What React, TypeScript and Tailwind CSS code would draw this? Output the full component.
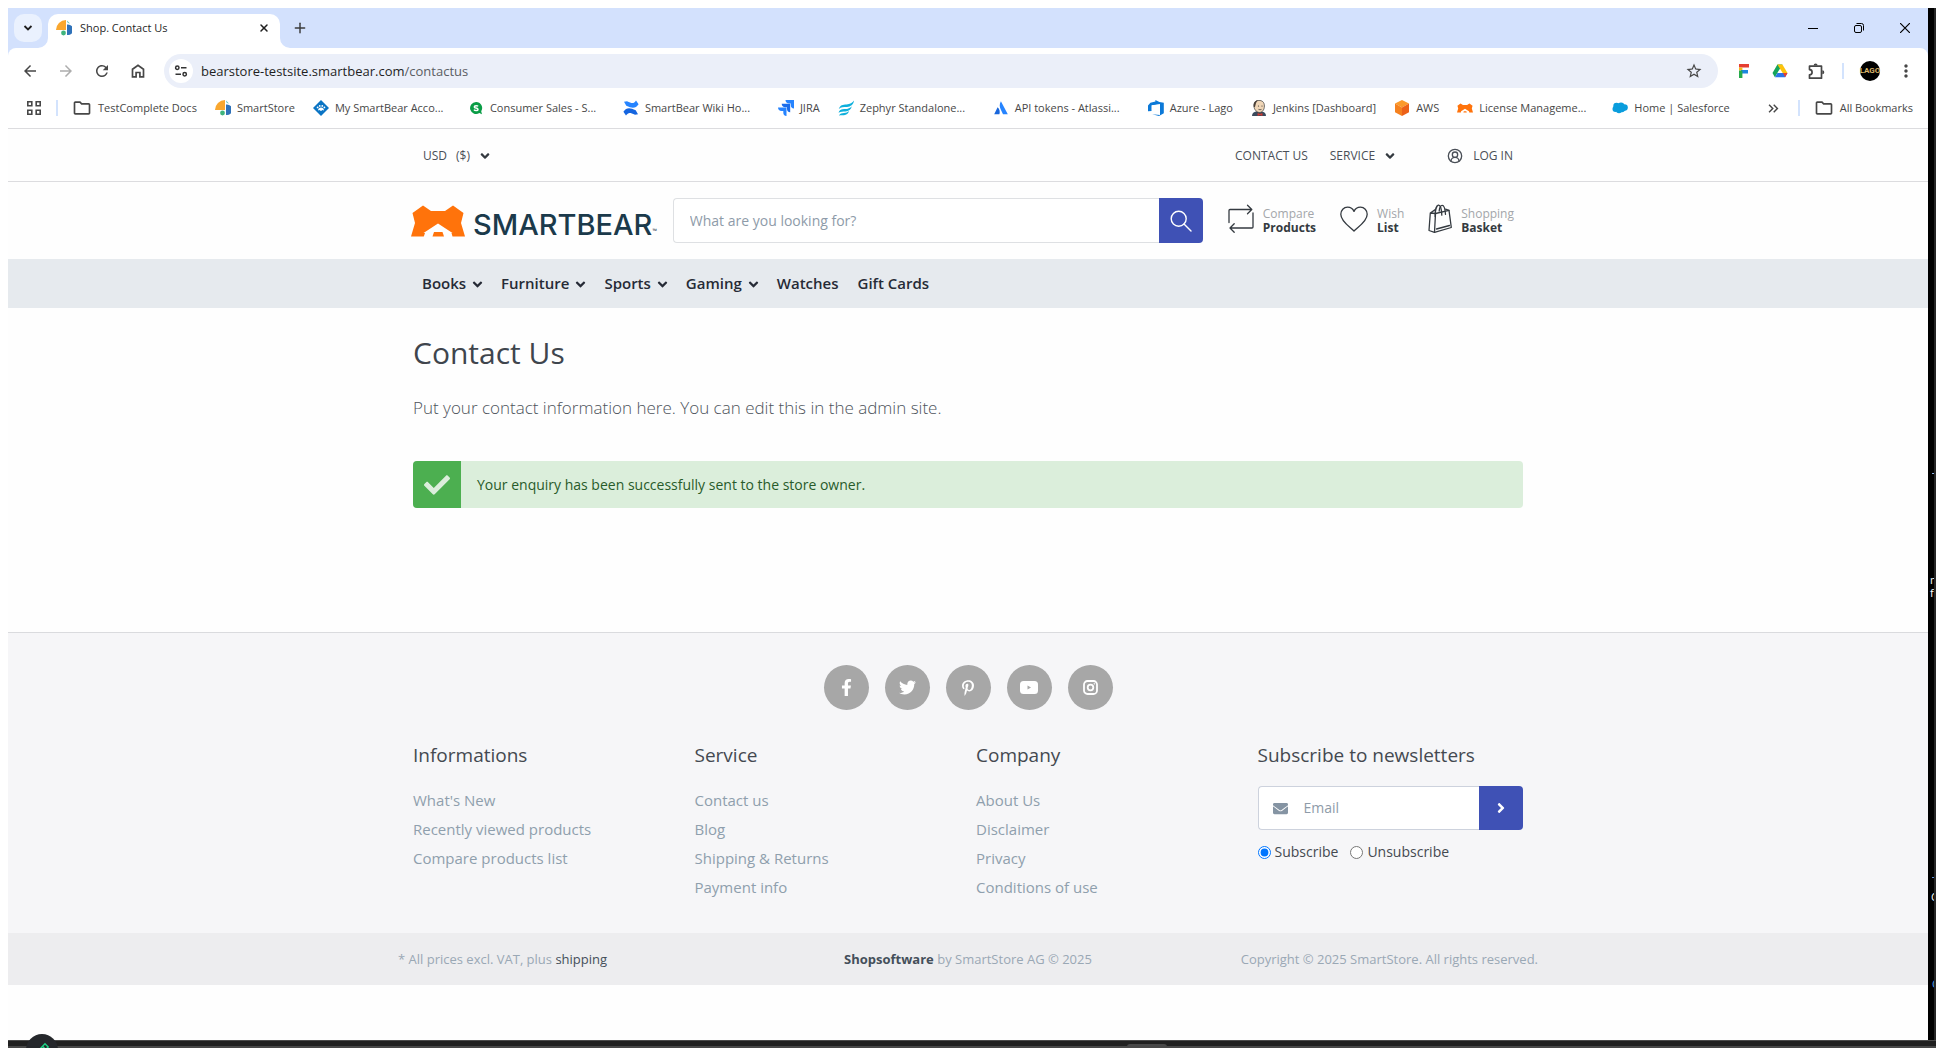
import React from "react";
import { CircleUserRound, Plus, X } from "lucide-react";
import { FaAngleDown, FaAngleRight, FaCheck, FaEnvelope, FaFacebookF, FaPinterestP, FaTwitter } from "react-icons/fa";
import {
  MdArrowBack,
  MdArrowForward,
  MdKeyboardDoubleArrowRight,
  MdMoreVert,
  MdOutlineFolder,
  MdRefresh,
  MdStarOutline,
} from "react-icons/md";

/* ---------- brand marks ---------- */

function SmartStoreMark() {
  return (
    <svg viewBox="0 0 16 16" className="size-4 shrink-0" aria-hidden="true">
      <path d="M10 0v10H0A10 10 0 0 1 10 0Z" fill="#f9a72f" />
      <path d="M11 0.5a3 3 0 0 0 3 3Z" fill="#5bc4bf" />
      <path d="M11 4.5h1a5.2 5.2 0 0 1 0 10.5h-1Z" fill="#2f72b9" />
      <circle cx="7.5" cy="13" r="2.4" fill="#3fb47d" />
    </svg>
  );
}

function PawMark() {
  return (
    <svg viewBox="0 0 16 16" className="size-4 shrink-0" aria-hidden="true">
      <path d="M8 0l8 8-8 8-8-8Z" fill="#0a74c4" />
      <path d="M5 10.5c0-2 1.5-3 3-3s3 1 3 3l-1.4-.6L8 11l-1.6-1.1Z" fill="#fff" />
      <circle cx="4.6" cy="7.4" r=".9" fill="#fff" />
      <circle cx="6.7" cy="5.9" r=".9" fill="#fff" />
      <circle cx="9.3" cy="5.9" r=".9" fill="#fff" />
      <circle cx="11.4" cy="7.4" r=".9" fill="#fff" />
    </svg>
  );
}

function SalesMark() {
  return (
    <svg viewBox="0 0 16 16" className="size-4 shrink-0" aria-hidden="true">
      <path d="M8 2a6 6 0 1 0 3.4 11L14 14.2l-.8-3A6 6 0 0 0 8 2Z" fill="#0a9d46" />
      <path d="M10 6.4C9.600 5.600 6.300 5.300 6.300 6.900c0 1.500 3.700.8 3.700 2.500 0 1.500-3.300 1.400-4 .2" fill="none" stroke="#fff" strokeWidth="1.500" />
    </svg>
  );
}

function ConfluenceMark() {
  return (
    <svg viewBox="0 0 16 16" className="size-4 shrink-0" aria-hidden="true">
      <path d="M.4 11.800 3 15.600c2.300-3.400 3.800-3.300 9-.8l3-.5-2.300-4C7 7.600 3.500 7.200.4 11.800Z" fill="#1565e0" />
      <path d="M15.600 4.200 13 .4C10.700 3.800 9.200 3.700 4 1.200L1 1.700l2.300 4c5.700 2.700 9.200 3.100 12.300-1.500Z" fill="#2684ff" />
    </svg>
  );
}

function JiraMark() {
  return (
    <svg viewBox="0 0 16 16" className="size-4 shrink-0" aria-hidden="true">
      <path d="M7.500 0H16v8.500a3.600 3.600 0 0 1-3.200-3.600V3.400h-1.700A3.600 3.600 0 0 1 7.500 0Z" fill="#2684ff" />
      <path d="M3.700 3.800h8.500v8.500A3.600 3.600 0 0 1 9 8.700V7.200H7.300a3.600 3.600 0 0 1-3.600-3.400Z" fill="#1a6cea" />
      <path d="M0 7.500h8.500V16a3.600 3.600 0 0 1-3.200-3.600v-1.500H3.600A3.600 3.600 0 0 1 0 7.500Z" fill="#2684ff" />
    </svg>
  );
}

function ZephyrMark() {
  return (
    <svg viewBox="0 0 16 16" className="size-4 shrink-0" aria-hidden="true">
      <g fill="#0fb0dc">
        <path d="M.8 9C2 4.800 5 4.600 8.500 4.400 12 4.200 14.500 2.800 16 .6c-.4 4-3.400 6.200-7 6.400C5.500 7.200 3 7 .8 9Z" />
        <path d="M.6 12.700c1-3.200 3.400-3.500 6.400-3.600 3-.1 5.200-1 6.800-2.900-.6 3.400-3.200 5-6.300 5.200-2.700.1-4.900-.1-6.900 1.300Z" />
        <path d="M1 15.700c.9-2.300 2.900-2.500 5-2.600 2.100-.1 3.700-.7 5-2-.6 2.600-2.600 4-5 4.200-1.900.1-3.500-.3-5 .4Z" />
      </g>
    </svg>
  );
}

function AtlassianMark() {
  return (
    <svg viewBox="0 0 16 16" className="size-4 shrink-0" aria-hidden="true">
      <path d="M4.600 7.200 1.200 14.300h5.200c.8-2.600.3-5.200-1.800-7.100Z" fill="#1866dc" />
      <path d="M7.900 1.200c-1.700 3-1.500 5.700.2 9l1.900 4.100h4.800Z" fill="#2684ff" />
    </svg>
  );
}

function AzureMark() {
  return (
    <svg viewBox="0 0 16 16" className="size-4 shrink-0" aria-hidden="true">
      <path d="M15.800 2.800v10.400L11 16l-6.800-1.800 7.800.8V4.200L3.600 5.200V11L0 11.200V5.400l2.400-2.600 5-1.400V0l4 2 4.400.8Z" fill="#0b79d8" />
      <path d="M3.800 5.400 12 4.200v8L3.800 10.800Z" fill="#fff" />
    </svg>
  );
}

function JenkinsMark() {
  return (
    <svg viewBox="0 0 16 16" className="size-4 shrink-0" aria-hidden="true">
      <path d="M1 16c0-3 2-4 4-4.500h6c2 .5 4 1.500 4 4.500Z" fill="#3a4a5c" />
      <path d="M3 6c0-4 2-5.600 5-5.600S13.400 2 13.400 6 11 12.500 8.600 12.500 3 10 3 6Z" fill="#f0d6b7" stroke="#333" strokeWidth=".7" />
      <path d="M2.800 7C2 3 4 .4 7 .6 4.800 2 5 4 4 7Z" fill="#4a4038" />
      <circle cx="7.500" cy="6" r=".6" fill="#333" />
      <circle cx="11" cy="6" r=".6" fill="#333" />
      <path d="M7.500 9.400q1.500.7 3 0" stroke="#333" strokeWidth=".7" fill="none" />
      <path d="M6.600 13l2.400 1 2.400-1v3L9 15l-2.400 1Z" fill="#d3382f" />
    </svg>
  );
}

function AwsMark() {
  return (
    <svg viewBox="0 0 16 16" className="size-4 shrink-0" aria-hidden="true">
      <path d="M8 0l7 3.600L8 7.500 1 3.600Z" fill="#fb9a2b" />
      <path d="M1 3.600l7 3.900V16l-7-3.800Z" fill="#f5811f" />
      <path d="M15 3.600 8 7.500V16l7-3.800Z" fill="#ec6119" />
    </svg>
  );
}

function BearMark({ className }: { className: string }) {
  return (
    <svg viewBox="0 0 54 32" className={className} aria-hidden="true">
      <path
        d="M1.500 8 12 .5 20 6h14L42 .500 52.500 8 50 18l4 13.500H41.500l-1-3.500h1L27 18.500 12.500 28h1.500L12.800 31.500H0L4 18Z"
        fill="#ff730b"
      />
      <path d="M23 27h8.500l1.500 4.500H21.500Z" fill="#ff730b" />
    </svg>
  );
}

function CloudMark() {
  return (
    <svg viewBox="0 0 16 16" className="size-4 shrink-0" aria-hidden="true">
      <g fill="#0a9ddd">
        <circle cx="4.500" cy="6" r="3.200" />
        <circle cx="9" cy="5.800" r="3.300" />
        <circle cx="12.500" cy="7.600" r="3.300" />
        <circle cx="3.500" cy="9" r="3" />
        <circle cx="7" cy="10.300" r="3" />
        <circle cx="10" cy="9.500" r="2.800" />
      </g>
    </svg>
  );
}

/* ---------- browser chrome ---------- */

function HomeGlyph() {
  return (
    <svg viewBox="0 0 14 14" className="size-[14px]" fill="none" stroke="#474747" strokeWidth="1.700" aria-hidden="true">
      <path d="M1.500 5.300 7 1.200l5.500 4.100v7.500H8.900V8.500H5.100v4.300H1.500Z" />
    </svg>
  );
}

function SiteInfoGlyph() {
  return (
    <svg viewBox="0 0 14 14" className="size-[14px]" fill="none" stroke="#333" strokeWidth="1.500" aria-hidden="true">
      <circle cx="3.300" cy="3.800" r="1.700" />
      <path d="M7 3.800h5.500M1.500 10.200H7" />
      <circle cx="10.700" cy="10.200" r="1.700" />
    </svg>
  );
}

function AppsGlyph() {
  return (
    <svg viewBox="0 0 14 14" className="size-[14px]" fill="none" stroke="#474747" strokeWidth="1.600" aria-hidden="true">
      <path d="M.8.800h4v4h-4ZM9.200.800h4v4h-4ZM.8 9.200h4v4h-4ZM9.200 9.200h4v4h-4Z" />
    </svg>
  );
}

function ExtensionsGlyph() {
  return (
    <svg viewBox="0 0 17 17" className="size-[17px]" fill="none" stroke="#474747" strokeWidth="1.700" strokeLinejoin="round" aria-hidden="true">
      <path d="M1.500 3.200h12v12h-12v-3.400a2.600 2.600 0 0 0 0-5.200Z" />
      <path d="M5.600 2.600a2 2 0 0 1 4 0ZM14.300 7.200a2 2 0 0 1 0 4Z" fill="#474747" stroke="none" />
    </svg>
  );
}

function ToolButton({ label, children }: { label: string; children: React.ReactNode }) {
  return (
    <button type="button" aria-label={label} className="flex size-7 shrink-0 items-center justify-center text-[#474747]">
      {children}
    </button>
  );
}

function TabStrip() {
  return (
    <div className="flex h-10 items-end justify-between bg-[#d3e1fd] pl-[6px]">
      <div className="flex items-end">
        <button type="button" aria-label="Search tabs" className="mb-[6px] flex size-7 items-center justify-center rounded-[10px] bg-[#eaf1fe]">
          <svg viewBox="0 0 10 10" className="size-[10px]" fill="none" stroke="#1f1f1f" strokeWidth="1.800" aria-hidden="true">
            <path d="M1.500 3 5 6.500 8.500 3" />
          </svg>
        </button>
        <div className="relative ml-[6px] flex h-[34px] w-[232px] items-center gap-2 rounded-t-[10px] bg-white pr-2 pb-[6px] pl-2">
          <svg viewBox="0 0 10 10" className="absolute bottom-0 -left-[10px] size-[10px] fill-white" aria-hidden="true">
            <path d="M10 0v10H0A10 10 0 0 0 10 0Z" />
          </svg>
          <svg viewBox="0 0 10 10" className="absolute -right-[10px] bottom-0 size-[10px] fill-white" aria-hidden="true">
            <path d="M0 0v10h10A10 10 0 0 1 0 0Z" />
          </svg>
          <SmartStoreMark />
          <span className="flex-1 text-[11px] leading-4 text-[#1f1f1f]">Shop. Contact Us</span>
          <button type="button" aria-label="Close tab" className="flex size-4 items-center justify-center">
            <X className="size-3 text-[#1f1f1f]" strokeWidth={3} />
          </button>
        </div>
        <button type="button" aria-label="New tab" className="mb-[6px] ml-[6px] flex size-7 items-center justify-center">
          <Plus className="size-4 text-[#3c3c3c]" strokeWidth={2.200} />
        </button>
      </div>
      <div className="mb-[6px] flex h-7 text-black">
        <button type="button" aria-label="Minimize" className="flex w-[46px] items-center justify-center">
          <svg viewBox="0 0 10 10" className="size-[10px]" stroke="currentColor" aria-hidden="true">
            <path d="M0 5.500h10" />
          </svg>
        </button>
        <button type="button" aria-label="Restore" className="flex w-[46px] items-center justify-center">
          <svg viewBox="0 0 10 10" className="size-[10px]" fill="none" stroke="currentColor" aria-hidden="true">
            <rect x=".5" y="2.500" width="7" height="7" rx="1.500" />
            <path d="M2.500.500h5a2 2 0 0 1 2 2v5" />
          </svg>
        </button>
        <button type="button" aria-label="Close window" className="flex w-[46px] items-center justify-center">
          <svg viewBox="0 0 10 10" className="size-[10px]" stroke="currentColor" strokeWidth="1.200" aria-hidden="true">
            <path d="M0 0l10 10M10 0 0 10" />
          </svg>
        </button>
      </div>
    </div>
  );
}

function Toolbar() {
  return (
    <div className="flex h-[46px] items-center gap-2 bg-white px-2">
      <ToolButton label="Back">
        <MdArrowBack size={18} />
      </ToolButton>
      <ToolButton label="Forward">
        <MdArrowForward size={18} color="#adadad" />
      </ToolButton>
      <ToolButton label="Reload">
        <MdRefresh size={18} />
      </ToolButton>
      <ToolButton label="Home">
        <HomeGlyph />
      </ToolButton>
      <div className="mx-1 flex h-[34px] flex-1 items-center rounded-full bg-[#ebeff9] pr-[10px] pl-[5px]">
        <button type="button" aria-label="View site information" className="flex size-6 items-center justify-center rounded-full bg-white">
          <SiteInfoGlyph />
        </button>
        <div className="ml-2 flex-1 text-[13px] leading-5 text-[#1f1f1f]">
          bearstore-testsite.smartbear.com<span className="text-[#5a5d63]">/contactus</span>
        </div>
        <ToolButton label="Bookmark this tab">
          <MdStarOutline size={18} />
        </ToolButton>
      </div>
      <ToolButton label="F extension">
        <svg viewBox="0 0 10 14" className="h-[14px] w-[10px]" aria-hidden="true">
          <path d="M0 0h10v3.600H0Z" fill="#e63e32" />
          <path d="M0 3.600h3.400v3H0Z" fill="#f5b81c" />
          <path d="M2 6h7v3.400H2Z" fill="#1c86e0" />
          <path d="M0 6.600h3.400V14H0Z" fill="#27ab4b" />
        </svg>
      </ToolButton>
      <ToolButton label="Drive extension">
        <svg viewBox="0 0 16 14" className="h-[14px] w-4" aria-hidden="true">
          <path d="M5.400.500h5L5.600 8.600 2.900 13.200.500 9Z" fill="#15a45a" />
          <path d="M5.400.500h5L15.500 9h-4.800Z" fill="#fdc30c" />
          <path d="M5.400 9h10.100l-2.400 4.200H2.900Z" fill="#2c74e8" />
          <path d="M11 9h4.500l-2.400 4.200Z" fill="#e8402f" />
        </svg>
      </ToolButton>
      <ToolButton label="Extensions">
        <ExtensionsGlyph />
      </ToolButton>
      <span className="mx-1 h-4 w-[2px] bg-[#d3e3fd]" />
      <button type="button" aria-label="Profile" className="flex size-7 items-center justify-center">
        <span className="flex size-5 items-center justify-center rounded-full bg-black font-[Roboto,sans-serif] text-[8px] leading-none font-bold text-[#d8b46a]">LAGO</span>
      </button>
      <ToolButton label="Menu">
        <MdMoreVert size={20} />
      </ToolButton>
    </div>
  );
}

const bookmarks: { label: string; icon: React.ReactNode; wide?: boolean }[] = [
  { label: "TestComplete Docs", icon: <MdOutlineFolder size={20} className="-ml-[2px] shrink-0" /> },
  { label: "SmartStore", icon: <SmartStoreMark /> },
  { label: "My SmartBear Acco...", icon: <PawMark />, wide: true },
  { label: "Consumer Sales - S...", icon: <SalesMark />, wide: true },
  { label: "SmartBear Wiki Ho...", icon: <ConfluenceMark />, wide: true },
  { label: "JIRA", icon: <JiraMark /> },
  { label: "Zephyr Standalone...", icon: <ZephyrMark />, wide: true },
  { label: "API tokens - Atlassi...", icon: <AtlassianMark />, wide: true },
  { label: "Azure - Lago", icon: <AzureMark /> },
  { label: "Jenkins [Dashboard]", icon: <JenkinsMark /> },
  { label: "AWS", icon: <AwsMark /> },
  { label: "License Manageme...", icon: <BearMark className="h-4 w-4 shrink-0" />, wide: true },
  { label: "Home | Salesforce", icon: <CloudMark /> },
];

function BookmarksBar() {
  return (
    <div className="flex h-[35px] items-center border-b border-[#dcdcdf] bg-white pr-[15px] pb-[6px] pl-[19px] text-[11px] leading-4 text-[#474747]">
      <button type="button" aria-label="Apps">
        <AppsGlyph />
      </button>
      <span className="ml-[15px] h-4 w-[2px] bg-[#d3e3fd]" />
      <nav aria-label="Bookmarks" className="ml-4 flex flex-1 gap-[18px]">
        {bookmarks.map((b) => (
          <a key={b.label} href="#" className="flex items-center gap-[6px] whitespace-nowrap">
            {b.icon}
            <span className={b.wide ? "w-[115px]" : ""}>{b.label}</span>
          </a>
        ))}
      </nav>
      <button type="button" aria-label="More bookmarks">
        <MdKeyboardDoubleArrowRight size={17} />
      </button>
      <span className="ml-4 h-4 w-[2px] bg-[#d3e3fd]" />
      <a href="#" className="ml-[14px] flex items-center gap-[6px]">
        <MdOutlineFolder size={20} />
        All Bookmarks
      </a>
    </div>
  );
}

/* ---------- store header ---------- */

function TopMenu() {
  return (
    <div className="border-b border-[#dcdcdf]">
      <div className="mx-auto flex h-[52px] max-w-[1140px] items-center justify-between px-[25px] pt-[2px] text-xs text-[#4a4f57]">
        <button type="button" className="flex items-center">
          <span>USD</span>
          <span className="ml-[9px]">($)</span>
          <FaAngleDown className="ml-2" size={14} color="#343a40" />
        </button>
        <nav aria-label="Service" className="flex items-center">
          <a href="#">CONTACT US</a>
          <button type="button" className="ml-[22px] flex items-center">
            SERVICE
            <FaAngleDown className="ml-2" size={14} color="#343a40" />
          </button>
          <a href="#" className="ml-[50px] flex items-center gap-[10px]">
            <CircleUserRound size={16} strokeWidth={2} />
            LOG IN
          </a>
        </nav>
      </div>
    </div>
  );
}

function CompareGlyph() {
  return (
    <svg viewBox="0 0 26 30" className="h-[30px] w-[26px]" fill="none" stroke="#343a40" strokeWidth="1.300" strokeLinecap="round" strokeLinejoin="round" aria-hidden="true">
      <path d="M1 18.500V6.500q0-1 1-1h21.500M19.500 1.200l4.300 4.300-4.300 4.300" />
      <path d="M25 9v14q0 1-1 1H2.500M6.200 19.800 2 24l4.200 4.300" />
    </svg>
  );
}

function HeartGlyph() {
  return (
    <svg viewBox="0 0 28 26" className="h-[26px] w-7" fill="none" stroke="#343a40" strokeWidth="1.300" strokeLinejoin="round" aria-hidden="true">
      <path d="M14 25C11 21.500.8 16 .8 8.300.8 4.200 3.800 1.200 7.500 1.200c2.800 0 5.400 1.600 6.500 4.200 1.100-2.600 3.700-4.200 6.500-4.200 3.700 0 6.700 3 6.700 7.100C27.200 16 17 21.500 14 25Z" />
    </svg>
  );
}

function BagGlyph() {
  return (
    <svg viewBox="0 0 24 30" className="h-[30px] w-6" fill="none" stroke="#343a40" strokeWidth="1.300" strokeLinecap="round" strokeLinejoin="round" aria-hidden="true">
      <path d="M2.300 9 7.500 9.500 21 6.300l2.300 17.200L6.500 28.300 1 26.500 2.300 9l5-3.400" />
      <path d="M7.500 9.500 6.500 28.300M8.500 25l13-3.500M17.500 5.200l3.500 1.100" />
      <path d="M7.200 12.500C7 6.500 8.500 1.800 10.300 1.200c2-.6 3.300 3.500 3.500 10" />
      <path d="M11.200 7c.3-3.500 1.700-5.500 3-5.600 2-.1 2.900 3.600 3.300 9" />
    </svg>
  );
}

const headerTools = [
  { top: "Compare", bottom: "Products", icon: <CompareGlyph /> },
  { top: "Wish", bottom: "List", icon: <HeartGlyph /> },
  { top: "Shopping", bottom: "Basket", icon: <BagGlyph /> },
];

function ShopHeader() {
  return (
    <div className="mx-auto flex h-[77px] max-w-[1140px] items-center px-[13px]">
      <a href="#" aria-label="SmartBear home" className="flex items-end">
        <BearMark className="h-8 w-[54px]" />
        <span className="ml-2 font-[Inter,sans-serif] text-[29px] leading-6 font-medium text-[#1b3a4b]">SMARTBEAR</span>
        <span className="text-[6px] leading-3 text-[#1b3a4b]">™</span>
      </a>
      <form className="ml-auto flex h-[45px] w-[530px]">
        <input
          type="search"
          aria-label="Search"
          placeholder="What are you looking for?"
          className="min-w-0 flex-1 rounded-l-[4px] border border-r-0 border-[#dee0e3] bg-white px-4 text-sm placeholder:text-[#8e9ba9]"
        />
        <button type="submit" aria-label="Search" className="flex w-11 items-center justify-center rounded-r-[4px] bg-[#3f51b5]">
          <svg viewBox="0 0 22 22" className="size-[22px]" fill="none" stroke="#fff" strokeWidth="1.400" strokeLinecap="round" aria-hidden="true">
            <circle cx="8.700" cy="8.700" r="7.500" />
            <path d="M14 14l7 7" />
          </svg>
        </button>
      </form>
      <nav aria-label="Shopping" className="ml-[25px] flex gap-6 pr-[11px] pb-1">
        {headerTools.map((t) => (
          <a key={t.top} href="#" className="flex items-center gap-[9px] text-xs leading-[14px]">
            {t.icon}
            <span className="pt-1">
              <span className="block text-[#a3a6aa]">{t.top}</span>
              <span className="block font-bold text-[#343a40]">{t.bottom}</span>
            </span>
          </a>
        ))}
      </nav>
    </div>
  );
}

const categories = [
  { label: "Books", menu: true },
  { label: "Furniture", menu: true },
  { label: "Sports", menu: true },
  { label: "Gaming", menu: true },
  { label: "Watches", menu: false },
  { label: "Gift Cards", menu: false },
];

function CategoryNav() {
  return (
    <div className="bg-[#e6eaee]">
      <nav aria-label="Categories" className="mx-auto flex h-[49px] max-w-[1140px] items-center gap-[19px] px-6 text-[15px] font-semibold text-[#262b36]">
        {categories.map((c) => (
          <a key={c.label} href="#" className="flex items-center gap-1">
            {c.label}
            {c.menu && <FaAngleDown size={15} className="mt-[2px] -mr-[3px]" />}
          </a>
        ))}
      </nav>
    </div>
  );
}

/* ---------- footer ---------- */

const social = [
  { label: "Facebook", icon: <FaFacebookF size={17} /> },
  { label: "Twitter", icon: <FaTwitter size={17} /> },
  { label: "Pinterest", icon: <FaPinterestP size={16} /> },
  {
    label: "YouTube",
    icon: (
      <svg viewBox="0 0 18 13" className="h-[13px] w-[18px]" aria-hidden="true">
        <rect width="18" height="13" rx="3.500" fill="#fff" />
        <path d="M7.500 4.500v4l3.500-2Z" fill="#a7a7a7" />
      </svg>
    ),
  },
  {
    label: "Instagram",
    icon: (
      <svg viewBox="0 0 15 15" className="size-[15px]" fill="none" stroke="#fff" strokeWidth="1.800" aria-hidden="true">
        <rect x="1" y="1" width="13" height="13" rx="3.500" />
        <circle cx="7.500" cy="7.500" r="2.800" />
        <circle cx="11.300" cy="3.800" r=".4" strokeWidth="1" />
      </svg>
    ),
  },
];

const linkColumns = [
  { title: "Informations", links: ["What's New", "Recently viewed products", "Compare products list"] },
  { title: "Service", links: ["Contact us", "Blog", "Shipping & Returns", "Payment info"] },
  { title: "Company", links: ["About Us", "Disclaimer", "Privacy", "Conditions of use"] },
];

function Newsletter() {
  return (
    <form>
      <h2 className="text-[19px] leading-6 text-[#444950]">Subscribe to newsletters</h2>
      <div className="mt-[19px] flex h-11">
        <div className="flex min-w-0 flex-1 items-center rounded-l-[4px] border border-r-0 border-[#cdd2dd] bg-white pl-[14px]">
          <label htmlFor="email" aria-label="Email" className="shrink-0">
            <FaEnvelope size={15} color="#8594a3" />
          </label>
          <input id="email" type="email" placeholder="Email" className="ml-4 w-full min-w-0 text-sm outline-none placeholder:text-[#8e9ba9]" />
        </div>
        <button type="submit" aria-label="Send" className="flex w-11 items-center justify-center rounded-r-[4px] bg-[#3f51b5] text-white">
          <FaAngleRight size={16} />
        </button>
      </div>
      <div className="mt-[10px] flex items-center gap-3 text-sm leading-6 text-[#444950]">
        <label className="flex items-center gap-1">
          <input type="radio" name="newsletter" defaultChecked className="size-[13px] accent-[#0075ff]" />
          Subscribe
        </label>
        <label className="flex items-center gap-1">
          <input type="radio" name="newsletter" className="size-[13px]" />
          Unsubscribe
        </label>
      </div>
    </form>
  );
}

function ShopFooter() {
  return (
    <footer>
      <div className="border-t border-[#dadbde] bg-[#f6f6f8] pt-8 pb-[31px]">
        <ul className="flex justify-center gap-4">
          {social.map((s) => (
            <li key={s.label}>
              <a href="#" aria-label={s.label} className="flex size-[45px] items-center justify-center rounded-full bg-[#a7a7a7] text-white">
                {s.icon}
              </a>
            </li>
          ))}
        </ul>
        <div className="mx-auto mt-[33px] grid max-w-[1140px] grid-cols-4 gap-4 px-[15px]">
          {linkColumns.map((col) => (
            <div key={col.title}>
              <h2 className="text-[19px] leading-6 text-[#444950]">{col.title}</h2>
              <ul className="mt-[19px] text-[15px] leading-[29px] text-[#8f9fad]">
                {col.links.map((l) => (
                  <li key={l}>
                    <a href="#">{l}</a>
                  </li>
                ))}
              </ul>
            </div>
          ))}
          <Newsletter />
        </div>
      </div>
      <div className="bg-[#ededef]">
        <div className="mx-auto grid h-[52px] max-w-[1140px] grid-cols-3 items-center pt-[2px] text-[13px] text-[#9aa8b5]">
          <p>
            * All prices excl. VAT, plus{" "}
            <a href="#" className="text-[#444f5a]">
              shipping
            </a>
          </p>
          <p className="text-center">
            <a href="#" className="font-bold text-[#444f5a]">
              Shopsoftware
            </a>{" "}
            by SmartStore AG © 2025
          </p>
          <p className="text-right">Copyright © 2025 SmartStore. All rights reserved.</p>
        </div>
      </div>
    </footer>
  );
}

export default function App() {
  return (
    <div className="relative flex min-h-screen flex-col overflow-hidden bg-white pt-2 font-['Open_Sans',sans-serif]">
      <div className="flex flex-1 pl-2">
        <div className="flex min-w-0 flex-1 flex-col bg-[#fefefe]">
          <header>
            <TabStrip />
            <div className="bg-[#d3e1fd]">
              <div className="overflow-hidden rounded-t-lg bg-white">
                <Toolbar />
              </div>
            </div>
            <BookmarksBar />
            <TopMenu />
            <ShopHeader />
            <CategoryNav />
          </header>
          <main className="mx-auto w-full max-w-[1140px] px-[15px] pt-[25px] pb-[124px]">
            <h1 className="text-[30px] leading-10 text-[#3f454d]">Contact Us</h1>
            <p className="mt-[23px] text-[17px] leading-6 font-light text-[#4d535b]">
              Put your contact information here. You can edit this in the admin site.
            </p>
            <div role="alert" className="mt-[41px] flex h-[47px] items-stretch overflow-hidden rounded-[4px] bg-[#dbeedb]">
              <span className="flex w-12 items-center justify-center bg-[#4caf50] text-[#dbeedb]">
                <FaCheck size={26} />
              </span>
              <span className="flex items-center pl-4 text-sm text-[#285b2a]">
                Your enquiry has been successfully sent to the store owner.
              </span>
            </div>
          </main>
          <ShopFooter />
        </div>
        <aside aria-hidden="true" className="relative w-2 shrink-0 overflow-hidden border-r-2 border-[#262626] bg-black text-[11px] leading-[13px] text-white">
          <span className="absolute top-[465px] left-1 h-px w-2 bg-[#8fb4e8]" />
          <span className="absolute top-[565px] left-[2px]">
            m
            <br />f
          </span>
          <span className="absolute top-[869px] left-1 h-px w-2 bg-[#5c8fd6]" />
          <span className="absolute top-[882px] left-[3px]">C</span>
          <span className="absolute top-[969px] left-1 text-[#5ea4f0]">C</span>
        </aside>
      </div>
      <div className="ml-2 h-2 border-t border-b-2 border-t-[#4a4a4a] border-b-[#484848] bg-[#202020]" />
      <div className="absolute right-[769px] bottom-0 h-1 w-10 rounded-t-[3px] bg-[#484848]" />
      <div className="absolute -bottom-[18px] left-[26px] flex size-8 items-center justify-center rounded-full bg-[#25272b]">
        <svg viewBox="0 0 16 16" className="size-4" fill="none" stroke="#1fd286" strokeWidth="1.400" aria-hidden="true">
          <path d="M1.500 14.500l1-4L11 1.800l3.200 3.200-8.700 8.500ZM8.500 4.300l3.200 3.200" />
        </svg>
      </div>
    </div>
  );
}
